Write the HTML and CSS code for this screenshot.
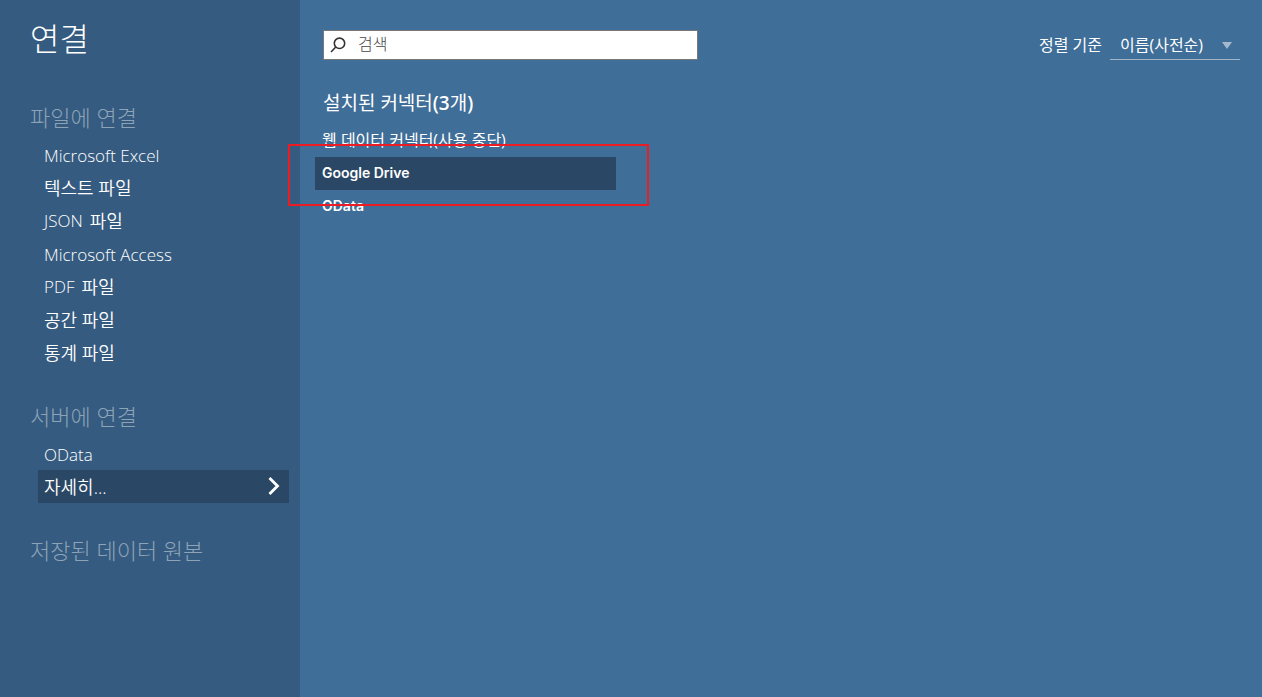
FILE: index.html
```html
<!DOCTYPE html>
<html lang="ko">
<head>
<meta charset="utf-8">
<meta name="viewport" content="width=device-width, initial-scale=1">
<title>연결</title>
<link rel="stylesheet" href="styles.css">
</head>
<body>
<div class="app">
  <nav class="sidebar">
    <h1 class="title">연결</h1>
    <section class="group">
      <h2 class="group-title">파일에 연결</h2>
      <ul class="links">
        <li><a class="link latin" href="#excel">Microsoft Excel</a></li>
        <li><a class="link" href="#text">텍스트 파일</a></li>
        <li><a class="link" href="#json"><span class="latin">JSON</span> 파일</a></li>
        <li><a class="link latin" href="#access">Microsoft Access</a></li>
        <li><a class="link" href="#pdf"><span class="latin">PDF</span> 파일</a></li>
        <li><a class="link" href="#spatial">공간 파일</a></li>
        <li><a class="link" href="#stats">통계 파일</a></li>
      </ul>
    </section>
    <section class="group">
      <h2 class="group-title">서버에 연결</h2>
      <ul class="links">
        <li><a class="link latin" href="#odata">OData</a></li>
        <li><a class="link selected" href="#more">자세히...
          <svg class="chevron" viewBox="0 0 12 20" aria-hidden="true"><path d="M1.500 2l8 8-8 8"/></svg></a></li>
      </ul>
    </section>
    <section class="group">
      <h2 class="group-title">저장된 데이터 원본</h2>
    </section>
  </nav>
  <main class="main">
    <div class="toolbar">
      <label class="search">
        <svg class="search-icon" viewBox="0 0 16 16" aria-hidden="true"><circle cx="9.500" cy="6.300" r="5.200"/><path d="M5.800 10L1 15"/></svg>
        <input class="search-input" type="search" placeholder="검색" aria-label="검색">
      </label>
      <div class="sort">
        <label class="sort-label" for="sort">정렬 기준</label>
        <div class="sort-box">
          <select class="sort-select" id="sort"><option>이름(사전순)</option></select>
          <svg class="sort-arrow" viewBox="0 0 10 7" aria-hidden="true"><path d="M0 0h10L5 7z"/></svg>
        </div>
      </div>
    </div>
    <h2 class="list-title">설치된 커넥터<span class="count">(3</span>개<span class="count">)</span></h2>
    <ul class="connectors">
      <li><a class="connector" href="#web">웹 데이터 커넥터(사용 중단)</a></li>
      <li class="marked"><a class="connector strong selected" href="#drive">Google Drive</a></li>
      <li><a class="connector strong" href="#odata-connector">OData</a></li>
    </ul>
  </main>
</div>
</body>
</html>
```
FILE: styles.css
```css
*, *::after { box-sizing: border-box; }
body {
  margin: 0;
  font-family: "Open Sans", "Noto Sans CJK KR", sans-serif;
  color: #fff;
  background: #3f6e98;
}
h1, h2, ul { margin: 0; padding: 0; font-weight: 300; }
ul { list-style: none; }
a { color: inherit; text-decoration: none; }
.app { display: flex; min-height: 100vh; }
.sidebar {
  flex: 0 0 300px;
  padding: 15px 11px 24px 30px;
  background: #355b80;
}
.title { font-size: 32px; line-height: 48px; margin-bottom: 37px; }
.group { margin-bottom: 29px; }
.group-title { font-size: 22px; line-height: 35px; margin-bottom: 3px; color: #8da3b8; }
.group + .group { margin-top: 30px; }
.links { padding-left: 8px; }
.link {
  display: flex;
  align-items: center;
  gap: 7px;
  height: 33px;
  padding: 0 9px 1px 6px;
  font-size: 18px;
  font-weight: 350;
}
.latin { font-size: 17px; font-weight: 350; }
.link.latin { padding-top: 2px; padding-bottom: 0; }
.selected { background: #2a4865; }
.chevron { width: 12px; height: 20px; margin-left: auto; fill: none; stroke: #fff; stroke-width: 2.800; }
.main { flex: 1; min-width: 0; padding: 30px 22px 24px 15px; }
.toolbar { display: flex; justify-content: space-between; padding-left: 8px; }
.search {
  display: flex;
  align-items: center;
  flex: 0 1 375px;
  height: 30px;
  padding: 0 7px 0 6px;
  gap: 12px;
  background: #fff;
  border: 1px solid #777;
}
.search-icon { flex: none; width: 16px; height: 16px; fill: none; stroke: #333; stroke-width: 1.600; }
.search-input {
  flex: 1;
  min-width: 0;
  padding: 0 0 2px;
  border: 0;
  outline: 0;
  background: none;
  font: 300 16px/24px "Open Sans", "Noto Sans CJK KR", sans-serif;
}
.search-input::placeholder { color: #444; opacity: 1; }
.sort { display: flex; align-items: center; gap: 8px; font-size: 16px; }
.sort-label { padding-bottom: 2px; }
.sort-box { position: relative; }
.sort-select {
  width: 130px;
  height: 30px;
  padding: 0 0 0 10px;
  appearance: none;
  border: 0;
  border-bottom: 1px solid #a5b5c8;
  border-radius: 0;
  background: transparent;
  color: inherit;
  font: 400 16px/24px "Open Sans", "Noto Sans CJK KR", sans-serif;
}
.sort-arrow { position: absolute; right: 8px; top: 12px; width: 10px; height: 7px; fill: #a5b9cd; pointer-events: none; }
.list-title { padding: 29px 8px 7px; font-size: 19px; line-height: 28px; font-weight: 400; }
.count { font-weight: 600; }
.connector {
  display: flex;
  align-items: center;
  width: 301px;
  max-width: 100%;
  height: 33px;
  padding: 0 7px 4px;
  font-size: 16px;
  font-weight: 400;
}
.connector.strong { padding-bottom: 2px; font-family: Inter, "Open Sans", sans-serif; font-size: 14px; font-weight: 600; }
.marked { position: relative; }
.marked::after {
  content: "";
  position: absolute;
  left: -27px;
  top: -13px;
  width: 361px;
  height: 62px;
  border: 2px solid #ed1c24;
  pointer-events: none;
}
```
